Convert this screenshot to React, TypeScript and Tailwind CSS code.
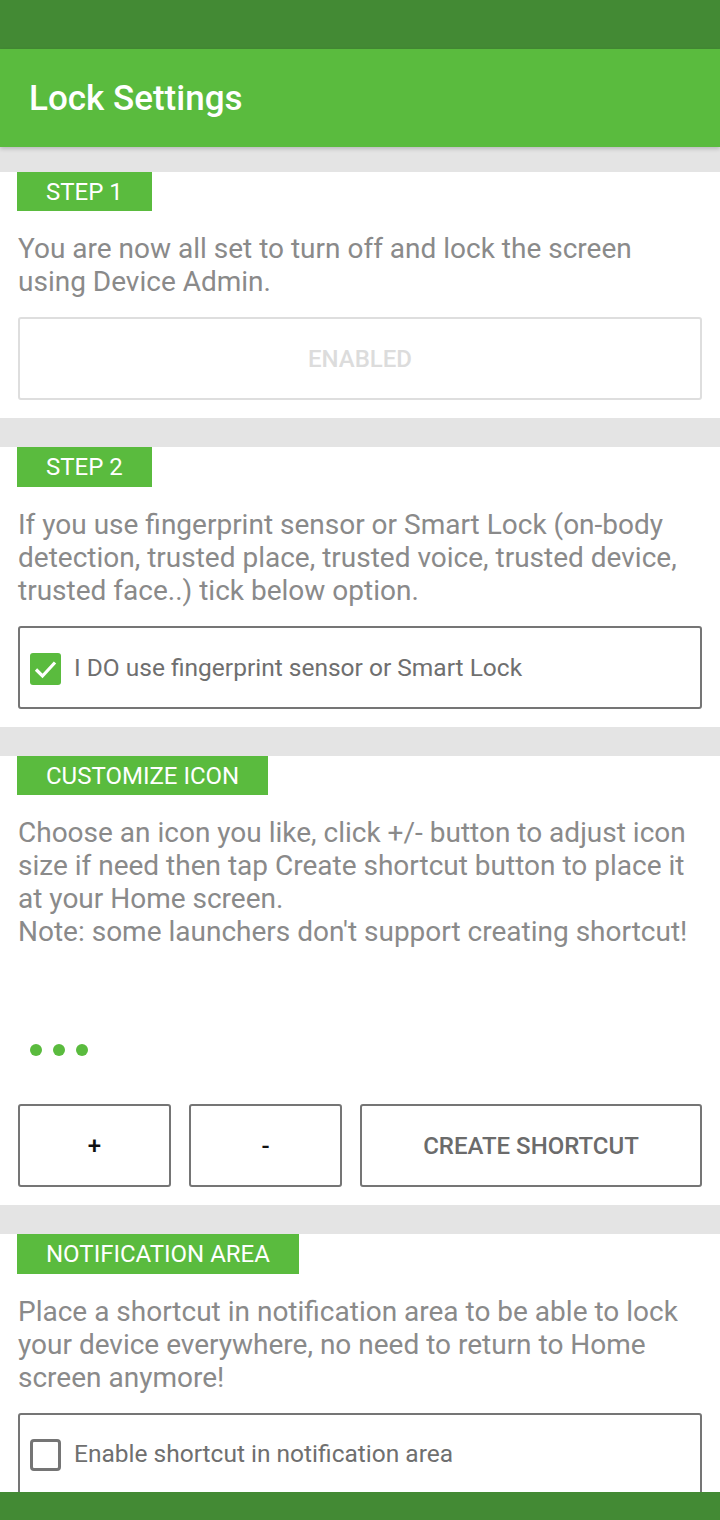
import React from "react";

function Badge({ label, tall }: { label: string; tall?: boolean }) {
  return (
    <div
      className={`self-start ml-[17px] ${tall ? "h-[40px]" : "h-[39px]"} px-[29px] bg-[#5abb3e] text-white text-[24px] flex items-center`}
    >
      {label}
    </div>
  );
}

function Body({ lines }: { lines: string[] }) {
  return (
    <div className="mx-[18px] mt-[21px] text-[28px] leading-[33px] text-[#8a8a8a] whitespace-nowrap">
      {lines.map((l, i) => (
        <div key={i} className="h-[33px]">
          {l}
        </div>
      ))}
    </div>
  );
}

export default function App() {
  return (
    <div className="w-[720px] h-[1520px] flex flex-col overflow-hidden bg-[#e4e4e4] font-['Roboto',sans-serif]">
      <div className="h-[49px] shrink-0 bg-[#438a34]" />
      <div className="h-[98px] shrink-0 bg-[#5abb3e] flex items-center pl-[29px] pt-[2px] text-white text-[35px] font-medium shadow-[0_2px_4px_rgba(0,0,0,0.18)] relative z-10">
        Lock Settings
      </div>
      <div className="flex-1 overflow-hidden pt-[25px] flex flex-col gap-[29px]">
        {/* Step 1 */}
        <div className="bg-white flex flex-col pb-[18px]">
          <Badge label="STEP 1" />
          <Body
            lines={[
              "You are now all set to turn off and lock the screen",
              "using Device Admin.",
            ]}
          />
          <div className="mx-[18px] mt-[19px] h-[83px] shrink-0 border-2 border-[#dedede] rounded-[3px] flex items-center justify-center text-[24px] font-medium text-[#dcdcdc]">
            ENABLED
          </div>
        </div>

        {/* Step 2 */}
        <div className="bg-white flex flex-col pb-[18px]">
          <Badge label="STEP 2" tall />
          <Body
            lines={[
              "If you use fingerprint sensor or Smart Lock (on-body",
              "detection, trusted place, trusted voice, trusted device,",
              "trusted face..) tick below option.",
            ]}
          />
          <div className="mx-[18px] mt-[19px] h-[83px] shrink-0 border-2 border-[#757575] rounded-[3px] flex items-center pl-[10px] pt-[2px]">
            <svg width="31" height="32" viewBox="0 0 31 32">
              <rect x="0" y="0" width="31" height="32" rx="3" fill="#5abb3e" />
              <polyline
                points="6,16.5 12.5,23 25,9.5"
                fill="none"
                stroke="#ffffff"
                strokeWidth="3.2"
              />
            </svg>
            <span className="ml-[13px] text-[24.5px] text-[#6f6f6f]">
              I DO use fingerprint sensor or Smart Lock
            </span>
          </div>
        </div>

        {/* Customize icon */}
        <div className="bg-white flex flex-col pb-[18px]">
          <Badge label="CUSTOMIZE ICON" />
          <Body
            lines={[
              "Choose an icon you like, click +/- button to adjust icon",
              "size if need then tap Create shortcut button to place it",
              "at your Home screen.",
              "Note: some launchers don't support creating shortcut!",
            ]}
          />
          <div className="ml-[30px] mt-[96px] flex gap-[11px]">
            <div className="w-[12px] h-[12px] rounded-full bg-[#5abb3e]" />
            <div className="w-[12px] h-[12px] rounded-full bg-[#5abb3e]" />
            <div className="w-[12px] h-[12px] rounded-full bg-[#5abb3e]" />
          </div>
          <div className="mx-[18px] mt-[48px] flex gap-[18px]">
            <div className="w-[153px] h-[83px] border-2 border-[#757575] rounded-[3px] flex items-center justify-center text-[24px] font-medium text-[#111]">
              +
            </div>
            <div className="w-[153px] h-[83px] border-2 border-[#757575] rounded-[3px] flex items-center justify-center text-[24px] font-medium text-[#111]">
              -
            </div>
            <div className="flex-1 h-[83px] border-2 border-[#757575] rounded-[3px] flex items-center justify-center text-[24px] font-medium text-[#6b6b6b]">
              CREATE SHORTCUT
            </div>
          </div>
        </div>

        {/* Notification area */}
        <div className="bg-white flex flex-col pb-[18px]">
          <Badge label="NOTIFICATION AREA" tall />
          <Body
            lines={[
              "Place a shortcut in notification area to be able to lock",
              "your device everywhere, no need to return to Home",
              "screen anymore!",
            ]}
          />
          <div className="mx-[18px] mt-[19px] h-[83px] shrink-0 border-2 border-[#757575] rounded-[3px] flex items-center pl-[10px]">
            <div className="w-[31px] h-[32px] border-[3px] border-[#757575] rounded-[4px]" />
            <span className="ml-[13px] text-[24.5px] text-[#6f6f6f]">
              Enable shortcut in notification area
            </span>
          </div>
        </div>
      </div>
      <div className="h-[28px] shrink-0 bg-[#438a34]" />
    </div>
  );
}
